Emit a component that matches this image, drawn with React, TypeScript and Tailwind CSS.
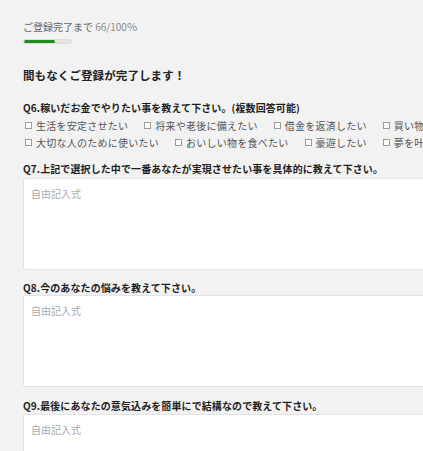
import React from "react";

const row1 = ["生活を安定させたい", "将来や老後に備えたい", "借金を返済したい", "買い物をしたい"];
const row2 = ["大切な人のために使いたい", "おいしい物を食べたい", "豪遊したい", "夢を叶えたい"];

function Check({ label }: { label: string }) {
  return (
    <label className="flex items-center shrink-0 mr-[16px]">
      <span className="w-[7px] h-[7px] border border-[#9a9a9a] bg-white mr-[4px] shrink-0" />
      <span className="text-[10px] leading-[17px] text-[#555] tracking-[0.25px]">{label}</span>
    </label>
  );
}

function Q({ children, mt }: { children: React.ReactNode; mt: string }) {
  return (
    <p className={`${mt} text-[10px] leading-[14px] font-bold text-[#1e1e1e] whitespace-nowrap tracking-[0.1px]`}>{children}</p>
  );
}

function Area({ mt }: { mt: string }) {
  return (
    <div className={`${mt} h-[92px] bg-white border border-[#e3e3e3] rounded-[2px] px-[7px] pt-[8px]`}>
      <p className="text-[10px] leading-[14px] text-[#aaa]">自由記入式</p>
    </div>
  );
}

export default function App() {
  return (
    <div
      className="w-[423px] h-[451px] overflow-hidden bg-[#f2f2f2]"
      style={{ fontFamily: '"Noto Sans CJK JP", "Noto Sans", sans-serif' }}
    >
      <div className="w-[520px] pl-[23px] pt-[19px]">
        <p className="text-[10px] leading-[14px] text-[#666] whitespace-nowrap">
          ご登録完了まで <span className="text-[#8a8a8a]">66/100</span>
          <span className="text-[#8a8a8a] text-[11px]">%</span>
        </p>
        <div className="mt-[5px] w-[49px] h-[5px] rounded-full bg-[#e4e4e4] border border-[#dcdcdc] overflow-hidden">
          <div className="h-full bg-[#1f8a1f] rounded-full" style={{ width: "66%" }} />
        </div>
        <h1 className="mt-[23px] text-[11.5px] leading-[16px] font-bold text-[#222] tracking-[0.1px]">
          間もなくご登録が完了します！
        </h1>
        <Q mt="mt-[18px]">Q6.稼いだお金でやりたい事を教えて下さい。(複数回答可能)</Q>
        <div className="mt-[2px] pl-[2px]">
          <div className="flex">
            {row1.map((l) => (
              <Check key={l} label={l} />
            ))}
          </div>
          <div className="flex">
            {row2.map((l) => (
              <Check key={l} label={l} />
            ))}
          </div>
        </div>
        <Q mt="mt-[11px]">Q7.上記で選択した中で一番あなたが実現させたい事を具体的に教えて下さい。</Q>
        <Area mt="mt-[2px]" />
        <Q mt="mt-[11px]">Q8.今のあなたの悩みを教えて下さい。</Q>
        <Area mt="mt-0" />
        <Q mt="mt-[12px]">Q9.最後にあなたの意気込みを簡単にで結構なので教えて下さい。</Q>
        <Area mt="mt-[1px]" />
      </div>
    </div>
  );
}
